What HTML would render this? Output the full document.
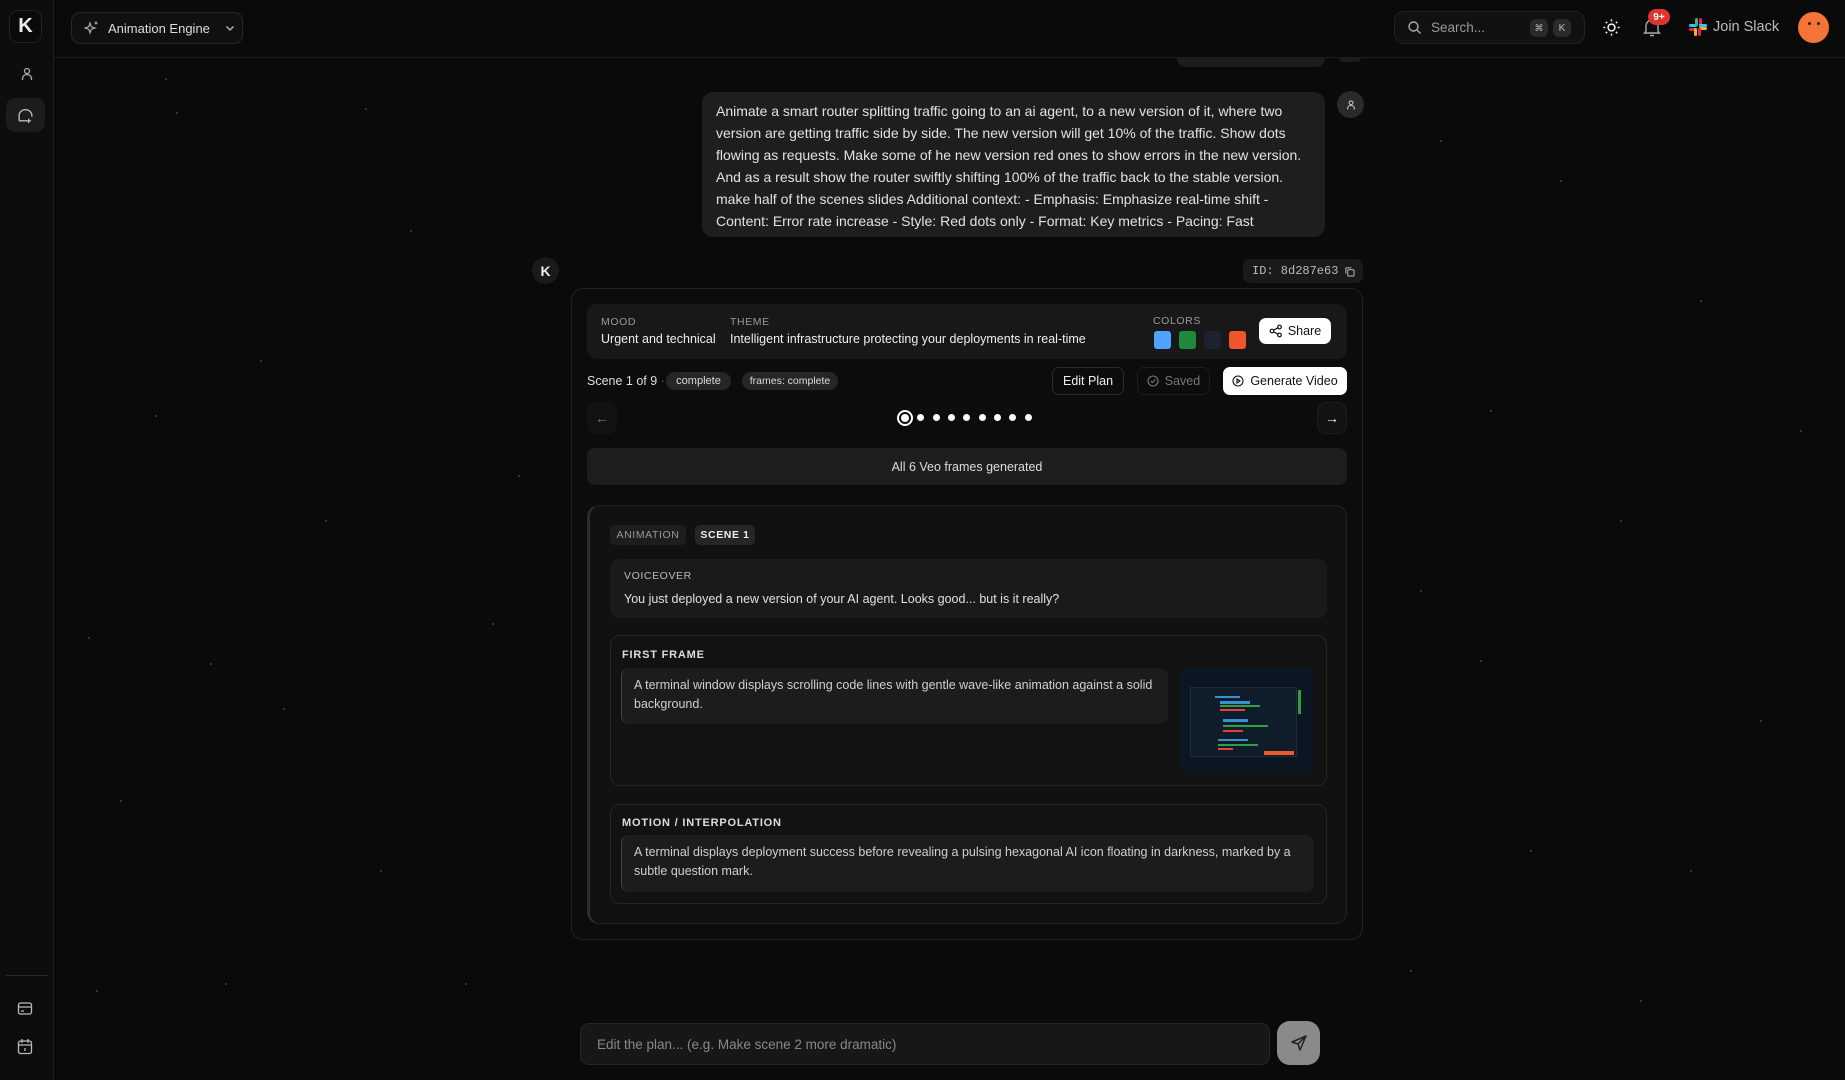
<!DOCTYPE html>
<html><head><meta charset="utf-8"><style>
*{box-sizing:border-box;margin:0;padding:0}
body{width:1845px;height:1080px;background:#0a0a0a;font-family:"Liberation Sans",sans-serif;color:#e5e5e5;position:relative;overflow:hidden}
.a{position:absolute}
.star{position:absolute;width:2px;height:2px;border-radius:50%;background:#444}
.side{left:0;top:0;width:54px;height:1080px;background:#0d0d0d;border-right:1px solid #1e1e1e}
.hdr{left:54px;top:0;right:0;height:58px;border-bottom:1px solid #1e1e1e;background:#0a0a0a}
.lbl{font-size:10.5px;letter-spacing:.6px;color:#9a9a9a}
.pill{background:#262626;border-radius:8px;font-size:11px;color:#ddd;display:flex;align-items:center;justify-content:center}
.btn{border:1px solid #2a2a2a;border-radius:7px;font-size:12.5px;display:flex;align-items:center;justify-content:center;gap:6px}
.box{border:1px solid #262626;border-radius:10px;background:#121212}
.ta{background:#1c1c1c;border-radius:8px;border-left:1px solid #444;font-size:12.5px;line-height:19px;color:#d0d0d0;padding:8px 12px}
.h{font-size:11px;font-weight:bold;letter-spacing:.8px;color:#ddd}
</style></head><body>
<div class="star" style="left:165px;top:78px"></div><div class="star" style="left:176px;top:112px"></div><div class="star" style="left:365px;top:108px"></div><div class="star" style="left:155px;top:415px"></div><div class="star" style="left:518px;top:475px"></div><div class="star" style="left:210px;top:663px"></div><div class="star" style="left:283px;top:708px"></div><div class="star" style="left:96px;top:990px"></div><div class="star" style="left:225px;top:983px"></div><div class="star" style="left:465px;top:983px"></div><div class="star" style="left:492px;top:623px"></div><div class="star" style="left:88px;top:637px"></div><div class="star" style="left:325px;top:520px"></div><div class="star" style="left:1420px;top:590px"></div><div class="star" style="left:1490px;top:410px"></div><div class="star" style="left:1620px;top:520px"></div><div class="star" style="left:1700px;top:300px"></div><div class="star" style="left:1760px;top:720px"></div><div class="star" style="left:1530px;top:850px"></div><div class="star" style="left:1410px;top:970px"></div><div class="star" style="left:1640px;top:1000px"></div><div class="star" style="left:1560px;top:180px"></div><div class="star" style="left:1440px;top:140px"></div><div class="star" style="left:1800px;top:430px"></div><div class="star" style="left:410px;top:230px"></div><div class="star" style="left:260px;top:360px"></div><div class="star" style="left:120px;top:800px"></div><div class="star" style="left:380px;top:870px"></div><div class="star" style="left:1480px;top:660px"></div><div class="star" style="left:1690px;top:870px"></div>

<div class="a side">
 <div class="a" style="left:9px;top:10px;width:33px;height:33px;border:1px solid #222;border-radius:9px;background:#0a0a0a;color:#eee;font-weight:bold;font-size:20px;display:flex;align-items:center;justify-content:center">K</div>
 <svg class="a" style="left:19px;top:66px" width="16" height="16" viewBox="0 0 16 16" fill="none" stroke="#aaa" stroke-width="1.3"><circle cx="8" cy="5" r="2.5"/><path d="M3.5 14v-1.5a4.5 4 0 0 1 9 0V14"/></svg>
 <div class="a" style="left:6px;top:98px;width:39px;height:34px;border-radius:9px;background:#1c1c1c"></div>
 <svg class="a" style="left:17px;top:107px" width="17" height="17" viewBox="0 0 16 16" fill="none" stroke="#bbb" stroke-width="1.3"><path d="M2 13V8a6 5.5 0 0 1 12 0v1M2 13h7M11 11v4M9 13h4"/></svg>
 <div class="a" style="left:6px;top:975px;width:42px;height:1px;background:#2a2a2a"></div>
 <svg class="a" style="left:17px;top:1001px" width="16" height="15" viewBox="0 0 16 15" fill="none" stroke="#bbb" stroke-width="1.3"><rect x="1.5" y="2" width="13" height="11" rx="2"/><path d="M1.5 6h13M4 10h3"/></svg>
 <svg class="a" style="left:17px;top:1038px" width="16" height="17" viewBox="0 0 16 17" fill="none" stroke="#bbb" stroke-width="1.3"><rect x="1.5" y="3" width="13" height="12.5" rx="2"/><path d="M1.5 7h13M5 1v4M11 1v4M8 10v3"/></svg>
</div>

<div class="a hdr"></div>
<div class="a" style="left:71px;top:12px;width:172px;height:32px;border:1px solid #262626;border-radius:9px;background:#101010;display:flex;align-items:center;padding-left:12px;font-size:13px;color:#ddd">
 <svg width="16" height="16" viewBox="0 0 16 16" fill="none" stroke="#aaa" stroke-width="1.2"><path d="M6 3l1.3 3.7L11 8l-3.7 1.3L6 13l-1.3-3.7L1 8l3.7-1.3z"/><path d="M12 1.5v3M10.5 3h3"/></svg>
 <span style="margin-left:8px">Animation Engine</span>
 <svg style="margin-left:14px" width="12" height="12" viewBox="0 0 12 12" fill="none" stroke="#bbb" stroke-width="1.3"><path d="M2.5 4.5L6 8l3.5-3.5"/></svg>
</div>

<div class="a" style="left:1394px;top:11px;width:191px;height:33px;border:1px solid #222;border-radius:10px;background:#111;display:flex;align-items:center;padding-left:12px;font-size:13.5px;color:#999">
 <svg width="15" height="15" viewBox="0 0 15 15" fill="none" stroke="#aaa" stroke-width="1.4"><circle cx="6.5" cy="6.5" r="4.5"/><path d="M10 10l3.5 3.5"/></svg>
 <span style="margin-left:9px">Search...</span>
 <span class="a" style="left:135px;top:7px;width:18px;height:18px;border-radius:6px;background:#2a2a2a;font-size:9px;color:#bbb;display:flex;align-items:center;justify-content:center">⌘</span>
 <span class="a" style="left:158px;top:7px;width:18px;height:18px;border-radius:6px;background:#2a2a2a;font-size:10px;color:#bbb;display:flex;align-items:center;justify-content:center">K</span>
</div>
<svg class="a" style="left:1602px;top:18px" width="19" height="19" viewBox="0 0 20 20" fill="none" stroke="#eee" stroke-width="1.6"><circle cx="10" cy="10" r="3.6"/><path d="M10 1.5v2M10 16.5v2M1.5 10h2M16.5 10h2M4 4l1.4 1.4M14.6 14.6L16 16M4 16l1.4-1.4M14.6 5.4L16 4"/></svg>
<svg class="a" style="left:1643px;top:17px" width="18" height="20" viewBox="0 0 18 20" fill="none" stroke="#aaa" stroke-width="1.4"><path d="M3 14V9a6 6 0 0 1 12 0v5l1.5 2h-15zM7 18.5h4"/></svg>
<div class="a" style="left:1648px;top:9px;width:22px;height:16px;border-radius:8px;background:#e0322f;font-size:10px;font-weight:bold;color:#fff;display:flex;align-items:center;justify-content:center">9+</div>
<svg class="a" style="left:1688px;top:17px" width="20" height="20" viewBox="0 0 20 20"><rect x="1" y="7" width="8" height="3" rx="1.5" fill="#36c5f0"/><rect x="7" y="1" width="3" height="8" rx="1.5" fill="#2eb67d"/><rect x="11" y="10" width="8" height="3" rx="1.5" fill="#ecb22e"/><rect x="10" y="11" width="3" height="8" rx="1.5" fill="#e01e5a"/><rect x="11" y="1" width="3" height="8" rx="1.5" fill="#e01e5a"/><rect x="1" y="11" width="8" height="3" rx="1.5" fill="#e01e5a"/><rect x="11" y="7" width="8" height="3" rx="1.5" fill="#36c5f0"/><rect x="6" y="11" width="3" height="8" rx="1.5" fill="#ecb22e"/></svg>
<div class="a" style="left:1713px;top:19px;font-size:14.5px;color:#bbb">Join Slack</div>
<div class="a" style="left:1798px;top:12px;width:31px;height:31px;border-radius:50%;background:#f47437"><div class="a" style="left:10px;top:10px;width:3px;height:3px;background:#222;border-radius:50%"></div><div class="a" style="left:19px;top:10px;width:3px;height:3px;background:#222;border-radius:50%"></div></div>

<div class="a" style="left:1177px;top:58px;width:148px;height:9px;background:#1c1c1c;border-radius:0 0 10px 10px"></div>
<div class="a" style="left:1339px;top:58px;width:22px;height:4px;background:#1c1c1c;border-radius:0 0 10px 10px"></div>

<div class="a" style="left:702px;top:92px;width:623px;height:145px;background:#1e1e1e;border-radius:11px;padding:9px 14px;font-size:14px;line-height:21.9px;color:#e2e2e2;white-space:nowrap">Animate a smart router splitting traffic going to an ai agent, to a new version of it, where two<br>version are getting traffic side by side. The new version will get 10% of the traffic. Show dots<br>flowing as requests. Make some of he new version red ones to show errors in the new version.<br>And as a result show the router swiftly shifting 100% of the traffic back to the stable version.<br>make half of the scenes slides Additional context: - Emphasis: Emphasize real-time shift -<br>Content: Error rate increase - Style: Red dots only - Format: Key metrics - Pacing: Fast</div>
<div class="a" style="left:1337px;top:91px;width:27px;height:27px;border-radius:50%;background:#2a2a2a;display:flex;align-items:center;justify-content:center"><svg width="12" height="12" viewBox="0 0 16 16" fill="none" stroke="#bbb" stroke-width="1.5"><circle cx="8" cy="5" r="2.5"/><path d="M3.5 14v-1.5a4.5 4 0 0 1 9 0V14"/></svg></div>

<div class="a" style="left:532px;top:257px;width:27px;height:27px;border-radius:50%;background:#1a1a1a;font-weight:bold;font-size:14px;display:flex;align-items:center;justify-content:center;color:#eee">K</div>
<div class="a" style="left:1243px;top:259px;width:120px;height:24px;border-radius:7px;background:#1a1a1a;font-family:'Liberation Mono',monospace;font-size:12px;color:#bbb;display:flex;align-items:center;padding-left:9px">ID: 8d287e63 <svg style="margin-left:6px" width="11" height="11" viewBox="0 0 12 12" fill="none" stroke="#aaa" stroke-width="1.2"><rect x="4" y="4" width="7" height="7" rx="1.5"/><path d="M2 8V2.5A.5.5 0 0 1 2.5 2H8"/></svg></div>

<div class="a" style="left:571px;top:288px;width:792px;height:652px;border:1px solid #222;border-radius:12px;background:#0c0c0c"></div>
<div class="a" style="left:587px;top:304px;width:760px;height:55px;border-radius:10px;background:#181818"></div>
<div class="a lbl" style="left:601px;top:316px">MOOD</div>
<div class="a" style="left:601px;top:332px;font-size:12.5px;color:#eee">Urgent and technical</div>
<div class="a lbl" style="left:730px;top:316px">THEME</div>
<div class="a" style="left:730px;top:332px;font-size:12.5px;color:#eee">Intelligent infrastructure protecting your deployments in real-time</div>
<div class="a lbl" style="left:1153px;top:315px">COLORS</div>
<div class="a" style="left:1154px;top:331px;width:17px;height:18px;border-radius:3px;background:#4da3ff"></div>
<div class="a" style="left:1179px;top:331px;width:17px;height:18px;border-radius:3px;background:#1f8a3c"></div>
<div class="a" style="left:1204px;top:331px;width:17px;height:18px;border-radius:3px;background:#1c2230"></div>
<div class="a" style="left:1229px;top:331px;width:17px;height:18px;border-radius:3px;background:#f0552b"></div>
<div class="a" style="left:1259px;top:318px;width:72px;height:26px;border-radius:7px;background:#fff;color:#111;font-size:12.5px;display:flex;align-items:center;justify-content:center;gap:5px"><svg width="14" height="14" viewBox="0 0 14 14" fill="none" stroke="#111" stroke-width="1.2"><circle cx="10.5" cy="3" r="1.8"/><circle cx="3" cy="7" r="1.8"/><circle cx="10.5" cy="11" r="1.8"/><path d="M4.6 6.1l4.3-2.3M4.6 7.9l4.3 2.3"/></svg>Share</div>

<div class="a" style="left:587px;top:374px;font-size:12.5px;color:#ddd">Scene 1 of 9 <span style="color:#555">·</span></div>
<div class="a pill" style="left:666px;top:372px;width:65px;height:18px;border-radius:9px">complete</div>
<div class="a pill" style="left:742px;top:372px;width:96px;height:18px;border-radius:9px;font-size:10.5px">frames: complete</div>
<div class="a btn" style="left:1052px;top:367px;width:72px;height:28px;color:#eee">Edit Plan</div>
<div class="a btn" style="left:1137px;top:367px;width:73px;height:28px;color:#777;border-color:#1e1e1e"><svg width="12" height="12" viewBox="0 0 12 12" fill="none" stroke="#777" stroke-width="1.1"><circle cx="6" cy="6" r="5"/><path d="M3.8 6l1.5 1.5L8.3 4.5"/></svg>Saved</div>
<div class="a btn" style="left:1223px;top:367px;width:124px;height:28px;background:#fff;color:#111;border-color:#fff"><svg width="12" height="12" viewBox="0 0 12 12" fill="none" stroke="#111" stroke-width="1.1"><circle cx="6" cy="6" r="5"/><path d="M5 4v4l3-2z"/></svg>Generate Video</div>

<div class="a" style="left:587px;top:402px;width:30px;height:32px;border-radius:9px;background:#121212;color:#777;font-size:14px;display:flex;align-items:center;justify-content:center">←</div>
<div class="a" style="left:1317px;top:402px;width:30px;height:32px;border-radius:9px;background:#121212;border:1px solid #1e1e1e;color:#eee;font-size:14px;display:flex;align-items:center;justify-content:center">→</div>
<div class="a" style="left:897px;top:410px;width:16px;height:16px;border-radius:50%;border:2px solid #fff"><div class="a" style="left:2px;top:2px;width:8px;height:8px;border-radius:50%;background:#fff"></div></div>
<div class="a" style="left:917px;top:414px;width:7px;height:7px;border-radius:50%;background:#fff"></div>
<div class="a" style="left:933px;top:414px;width:7px;height:7px;border-radius:50%;background:#fff"></div>
<div class="a" style="left:948px;top:414px;width:7px;height:7px;border-radius:50%;background:#fff"></div>
<div class="a" style="left:963px;top:414px;width:7px;height:7px;border-radius:50%;background:#fff"></div>
<div class="a" style="left:979px;top:414px;width:7px;height:7px;border-radius:50%;background:#fff"></div>
<div class="a" style="left:994px;top:414px;width:7px;height:7px;border-radius:50%;background:#fff"></div>
<div class="a" style="left:1009px;top:414px;width:7px;height:7px;border-radius:50%;background:#fff"></div>
<div class="a" style="left:1025px;top:414px;width:7px;height:7px;border-radius:50%;background:#fff"></div>

<div class="a" style="left:587px;top:448px;width:760px;height:37px;border-radius:8px;background:#1e1e1e;font-size:12.5px;color:#ddd;display:flex;align-items:center;justify-content:center">All 6 Veo frames generated</div>

<div class="a" style="left:587px;top:505px;width:760px;height:419px;border:1px solid #232323;border-left:3px solid #2c2c2c;border-radius:12px;background:#111"></div>
<div class="a pill" style="left:610px;top:525px;width:76px;height:20px;border-radius:5px;font-size:10.5px;letter-spacing:.6px;color:#999;background:#1e1e1e">ANIMATION</div>
<div class="a pill" style="left:695px;top:525px;width:60px;height:20px;border-radius:5px;font-size:10.5px;letter-spacing:.6px;font-weight:bold;color:#eee">SCENE 1</div>

<div class="a" style="left:610px;top:559px;width:717px;height:59px;border-radius:9px;background:#1a1a1a"></div>
<div class="a lbl" style="left:624px;top:570px;color:#bbb">VOICEOVER</div>
<div class="a" style="left:624px;top:592px;font-size:12.5px;color:#e0e0e0">You just deployed a new version of your AI agent. Looks good... but is it really?</div>

<div class="a box" style="left:610px;top:635px;width:717px;height:151px"></div>
<div class="a h" style="left:622px;top:649px">FIRST FRAME</div>
<div class="a ta" style="left:621px;top:668px;width:547px;height:56px">A terminal window displays scrolling code lines with gentle wave-like animation against a solid background.</div>
<div class="a" style="left:1180px;top:668px;width:134px;height:106px;background:#0b1622">
 <div class="a" style="left:10px;top:19px;width:107px;height:70px;background:#0f1d2a;border:1px solid #1d2c3a"></div>
 <div class="a" style="left:35px;top:28px;width:25px;height:2px;background:#3a8fd0"></div>
 <div class="a" style="left:40px;top:33px;width:30px;height:3px;background:#3a8fd0"></div>
 <div class="a" style="left:40px;top:37px;width:40px;height:2px;background:#2ea043"></div>
 <div class="a" style="left:40px;top:41px;width:25px;height:2px;background:#e04040"></div>
 <div class="a" style="left:43px;top:51px;width:25px;height:3px;background:#3a8fd0"></div>
 <div class="a" style="left:43px;top:57px;width:45px;height:2px;background:#2ea043"></div>
 <div class="a" style="left:43px;top:62px;width:20px;height:2px;background:#e04040"></div>
 <div class="a" style="left:38px;top:71px;width:30px;height:2px;background:#3a8fd0"></div>
 <div class="a" style="left:38px;top:76px;width:40px;height:2px;background:#2ea043"></div>
 <div class="a" style="left:38px;top:80px;width:15px;height:2px;background:#e04040"></div>
 <div class="a" style="left:84px;top:83px;width:30px;height:4px;background:#f05a2a"></div>
 <div class="a" style="left:118px;top:22px;width:3px;height:24px;background:#2ea043"></div>
</div>

<div class="a box" style="left:610px;top:804px;width:717px;height:100px"></div>
<div class="a h" style="left:622px;top:817px">MOTION / INTERPOLATION</div>
<div class="a ta" style="left:621px;top:835px;width:693px;height:57px">A terminal displays deployment success before revealing a pulsing hexagonal AI icon floating in darkness, marked by a subtle question mark.</div>

<div class="a" style="left:580px;top:1023px;width:690px;height:42px;border:1px solid #262626;border-radius:9px;background:#171717;font-size:13.5px;color:#888;display:flex;align-items:center;padding-left:16px">Edit the plan... (e.g. Make scene 2 more dramatic)</div>
<div class="a" style="left:1277px;top:1021px;width:43px;height:44px;border-radius:13px;background:#8a8a8a;display:flex;align-items:center;justify-content:center"><svg width="18" height="18" viewBox="0 0 18 18" fill="none" stroke="#222" stroke-width="1.5" stroke-linejoin="round"><path d="M16 2L2 8l6 2 2 6z M16 2L8 10"/></svg></div>
</body></html>
